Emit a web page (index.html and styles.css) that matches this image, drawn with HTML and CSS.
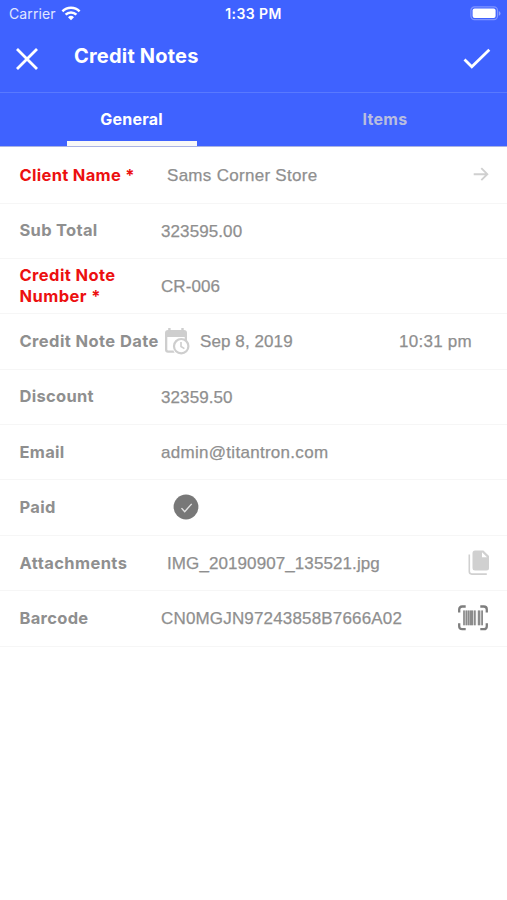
FILE: index.html
```html
<!DOCTYPE html>
<html lang="en">
<head>
<meta charset="utf-8">
<title>Credit Notes</title>
<link rel="stylesheet" href="styles.css">
</head>
<body>
<header class="header">
  <div class="status">
    <div class="carrier"><span>Carrier</span>
      <svg class="wifi" width="20" height="15" viewBox="0 0 20 15"><g fill="none" stroke="#fff" stroke-width="2.5"><path d="M1.4 5.3a12.2 12.2 0 0 1 17.2 0"/><path d="M4.6 8.7a7.7 7.7 0 0 1 10.8 0"/></g><path d="M10 14.2l-3-3a4.3 4.3 0 0 1 6 0z" fill="#fff"/></svg>
    </div>
    <span class="clock">1:33 PM</span>
    <svg class="battery" width="31" height="15" viewBox="0 0 31 15"><rect x=".9" y=".9" width="26.6" height="12.8" rx="3.6" fill="none" stroke="#8095ff" stroke-width="1.2"/><rect x="2.6" y="2.6" width="23" height="9.4" rx="2" fill="#fff"/><path d="M28.8 5v4.8q1.7-.8 1.7-2.4t-1.7-2.4z" fill="#8ea1ff"/></svg>
  </div>
  <div class="navbar">
    <svg class="close" width="22" height="22" viewBox="0 0 22 22"><path d="M1 1l20 20M21 1L1 21" stroke="#fff" stroke-width="2.8"/></svg>
    <h1>Credit Notes</h1>
    <svg class="done" width="28" height="22" viewBox="0 0 28 22"><path d="M1.5 11.5l7.3 7.3L26.3 1.7" fill="none" stroke="#fff" stroke-width="2.8"/></svg>
  </div>
  <nav class="tabs">
    <div class="tab active">General</div>
    <div class="tab">Items</div>
  </nav>
</header>
<main class="form">
  <div class="row first"><div class="label required tight">Client Name *</div><div class="value inset wide">Sams Corner Store</div>
    <svg class="arrow" width="16" height="15" viewBox="0 0 16 15"><path d="M.7 7.2H14M8.3 1.2l6 6-6 6" fill="none" stroke="#d0d0d0" stroke-width="1.9"/></svg></div>
  <div class="row"><div class="label tight">Sub Total</div><div class="value">323595.00</div></div>
  <div class="row"><div class="label required number">Credit Note Number *</div><div class="value">CR-006</div></div>
  <div class="row"><div class="label">Credit Note Date</div>
    <svg class="calendar" width="26" height="28" viewBox="0 0 26 28"><path d="M4 3h16q3 0 3 3v8.5a8 8 0 0 0-2.3-.8V10H3.3v12.5q0 1 1 1h5.2q.4 1.3 1.2 2.3H4q-3 0-3-3V6q0-3 3-3z" fill="#cecece"/><path d="M5.4 1v4M18.5 1v4" stroke="#cecece" stroke-width="2.4"/><circle cx="17.2" cy="19.2" r="7.2" fill="#fff" stroke="#cecece" stroke-width="2.2"/><path d="M17 15v4.5l3.4 2.1" fill="none" stroke="#cecece" stroke-width="1.6"/></svg>
    <div class="value date">Sep 8, 2019</div><div class="value time">10:31 pm</div></div>
  <div class="row"><div class="label tight">Discount</div><div class="value">32359.50</div></div>
  <div class="row"><div class="label tight">Email</div><div class="value wide">admin@titantron.com</div></div>
  <div class="row"><div class="label tight">Paid</div>
    <svg class="paid" width="26" height="26" viewBox="0 0 26 26"><circle cx="13" cy="13" r="12.4" fill="#787878"/><path d="M8.5 14.1l3.2 3.5 7-7.7" fill="none" stroke="#e4e4e4" stroke-width="1.4"/></svg></div>
  <div class="row"><div class="label">Attachments</div><div class="value inset">IMG_20190907_135521.jpg</div>
    <svg class="copy" width="22" height="26" viewBox="0 0 22 26"><path d="M7 .5h8.4l5.6 5.6V18q0 2.5-2.5 2.5H7Q4.5 20.5 4.5 18V3Q4.5.5 7 .5z" fill="#d0d0d0"/><path d="M14 2.3v5h5z" fill="#fff"/><path d="M1.3 4.6v17q0 2.5 2.5 2.5h15" fill="none" stroke="#d0d0d0" stroke-width="1.6"/></svg></div>
  <div class="row"><div class="label tight">Barcode</div><div class="value barcode">CN0MGJN97243858B7666A02</div>
    <svg class="scan" width="30" height="26" viewBox="0 0 30 26"><path d="M1.2 7.5v-3q0-3 3-3h3.5M22.3 1.5h3.5q3 0 3 3v3M28.8 18.2v3q0 3-3 3h-3.5M7.7 24.2H4.2q-3 0-3-3v-3" fill="none" stroke="#7e7e7e" stroke-width="2.3"/><path d="M5.2 5.4h13v14.8h-13zM19.4 5.4h5.6v14.8h-5.6z" fill="#d2d2d2"/><path d="M5.2 5.4h1.6v14.8H5.2zM7.7 5.4h1.5v14.8H7.7zM9.8 5.4h1.7v14.8H9.8zM12 5.4h3v14.8h-3zM16 5.4h1.6v14.8H16zM20 5.4h2v14.8h-2zM23.3 5.4h1.7v14.8h-1.7z" fill="#8b8b8b"/></svg></div>
</main>
</body>
</html>
```

FILE: styles.css
```css
* { box-sizing: border-box; }
body { margin: 0; width: 507px; height: 900px; background: #fff; color: #8f8f8f; font-family: "Liberation Sans", Arial, sans-serif; overflow: hidden; }
svg { display: block; flex: none; }
.header { height: 147px; background: #3f62ff; color: #fff; font-family: Inter, sans-serif; border-bottom: 1px solid #aab3e3; }
.status { height: 27px; display: grid; grid-template-columns: 1fr auto 1fr; align-items: center; padding: 0 6px 0 9px; }
.carrier { display: flex; align-items: center; gap: 5px; font-size: 14px; letter-spacing: .1px; color: #e0e6ff; }
.wifi { margin-top: -1px; }
.clock { font-size: 14px; font-weight: 600; letter-spacing: .4px; margin-right: 3px; }
.battery { justify-self: end; }
.navbar { height: 66px; display: flex; align-items: center; padding: 0 16px; border-bottom: 1px solid #5979ff; }
.close, .done { margin-top: -1px; }
.navbar h1 { margin: -7px auto 0 36px; font-size: 20px; line-height: 26px; font-weight: 700; letter-spacing: .2px; }
.tabs { height: 53px; display: grid; grid-template-columns: 263px 1fr; text-align: center; font-size: 16px; line-height: 53px; font-weight: 700; letter-spacing: .25px; }
.tab { color: #b8bddf; }
.active { color: #fff; justify-self: center; width: 130px; box-shadow: inset 0 -5px #f8f8f8; }
.form { width: 100%; }
.row { height: 55.4px; padding-left: 19.5px; display: flex; align-items: center; border-bottom: 1.5px solid #f6f6f6; }
.first { height: 56.5px; }
.label { flex: none; width: 141.5px; font: 700 16.5px/21px Inter, sans-serif; letter-spacing: .41px; white-space: nowrap; }
.required { color: #ec1010; }
.tight { letter-spacing: .3px; }
.first .label { padding-top: 1px; }
.number { padding-right: 30px; white-space: normal; }
.value { font-size: 17px; line-height: 20px; white-space: nowrap; padding-top: 2px; letter-spacing: .09px; -webkit-text-stroke: .25px #8f8f8f; }
.inset { margin-left: 6px; }
.wide { letter-spacing: .29px; }
.barcode { letter-spacing: .17px; }
.arrow { margin: -1px 18px 0 auto; }
.calendar { margin-left: 2.5px; }
.date { margin-left: 10.5px; }
.time { margin: 0 35px 0 auto; letter-spacing: .25px; }
.paid { margin: -1px 0 0 11.5px; }
.copy { margin: 0 17px 0 auto; }
.scan { margin: 0 19px 0 auto; }
```
